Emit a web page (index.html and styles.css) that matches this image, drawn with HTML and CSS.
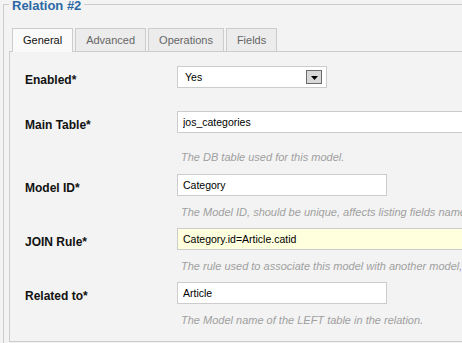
FILE: index.html
```html
<!DOCTYPE html>
<html lang="en">
<head>
<meta charset="utf-8">
<title>Relation #2</title>
<link rel="stylesheet" href="styles.css">
</head>
<body>
<fieldset class="relation">
  <legend class="relation-title">Relation #2</legend>
  <ul class="tabs">
    <li class="tab active">General</li>
    <li class="tab">Advanced</li>
    <li class="tab">Operations</li>
    <li class="tab">Fields</li>
  </ul>
  <div class="panel">
    <div class="row row-enabled">
      <label class="label">Enabled*</label>
      <div class="select">
        <span class="select-value">Yes</span>
        <span class="select-arrow"><svg width="7" height="4" viewBox="0 0 7 4"><polygon points="0,0 7,0 3.5,4" fill="#000"/></svg></span>
      </div>
    </div>
    <div class="row row-main">
      <label class="label">Main Table*</label>
      <input class="input wide" type="text" value="jos_categories">
      <div class="hint">The DB table used for this model.</div>
    </div>
    <div class="row">
      <label class="label">Model ID*</label>
      <input class="input" type="text" value="Category">
      <div class="hint">The Model ID, should be unique, affects listing fields names in other models.</div>
    </div>
    <div class="row">
      <label class="label">JOIN Rule*</label>
      <input class="input wide highlight" type="text" value="Category.id=Article.catid">
      <div class="hint">The rule used to associate this model with another model, e.g. Category.id=Article.catid</div>
    </div>
    <div class="row row-last">
      <label class="label">Related to*</label>
      <input class="input" type="text" value="Article">
      <div class="hint">The Model name of the LEFT table in the relation.</div>
    </div>
  </div>
</fieldset>
</body>
</html>
```

FILE: styles.css
```css
html, body {
  margin: 0;
  padding: 0;
  overflow: hidden;
  background: #f3f3f3;
}

body {
  width: 462px;
  height: 343px;
  font-family: "Liberation Sans", Arial, sans-serif;
  color: #111;
}

.relation {
  margin: -5px 0 0 3px;
  padding: 0 0 30px 5px;
  border: 1px solid #cccccc;
  width: 720px;
  min-width: 0;
  box-sizing: border-box;
}

.relation-title {
  padding: 3px 3px 0;
  margin: 0;
  font-size: 13px;
  line-height: 15px;
  font-weight: bold;
  color: #2b68a5;
}

.tabs {
  list-style: none;
  margin: 15px 0 0;
  padding: 0 0 0 3px;
  display: flex;
  align-items: flex-start;
}

.tab {
  padding: 0 10px;
  line-height: 22px;
  border: 1px solid #cccccc;
  border-bottom: 0;
  margin-right: 2px;
  font-size: 11px;
  color: #666666;
  background: #ececec;
}

.tab.active {
  position: relative;
  background: #fafafa;
  color: #111111;
  padding-bottom: 1px;
  margin-bottom: -1px;
}

.panel {
  border: 1px solid #cccccc;
  padding: 14px 0 14px 15px;
  background: #f3f3f3;
}

.row {
  display: grid;
  grid-template-columns: 152px 1fr;
  align-items: start;
  margin-bottom: 9px;
}

.row-enabled {
  margin-bottom: 23px;
}

.row-main {
  margin-bottom: 10px;
}

.row-main .hint {
  margin-top: 17px;
}

.row-last {
  margin-bottom: 0;
}

.label {
  font-size: 12px;
  font-weight: bold;
  line-height: 14px;
  padding-top: 7px;
  color: #111111;
}

.input {
  box-sizing: border-box;
  width: 210px;
  height: 22px;
  margin: 0;
  padding: 0 5px;
  border: 1px solid #cccccc;
  border-radius: 0;
  background: #ffffff;
  font-family: "Liberation Sans", Arial, sans-serif;
  font-size: 10.5px;
  color: #000000;
  outline: none;
}

.input.wide {
  width: 420px;
}

.input.highlight {
  background: #ffffdd;
}

.hint {
  grid-column: 2;
  margin-top: 9px;
  padding-left: 4px;
  font-size: 11px;
  font-style: italic;
  line-height: 14px;
  color: #a0a0a0;
  white-space: nowrap;
}

.select {
  box-sizing: border-box;
  width: 150px;
  height: 22px;
  border: 1px solid #cccccc;
  background: #ffffff;
  display: flex;
  align-items: center;
  justify-content: space-between;
  padding: 0 4px 0 7px;
  font-size: 10.5px;
  color: #000000;
}

.select-arrow {
  box-sizing: border-box;
  width: 16px;
  height: 14px;
  border: 1px solid #6b6b6b;
  background: #d8d8d8;
  display: flex;
  align-items: center;
  justify-content: center;
  padding-top: 2px;
}

.select-arrow svg {
  display: block;
}
```
